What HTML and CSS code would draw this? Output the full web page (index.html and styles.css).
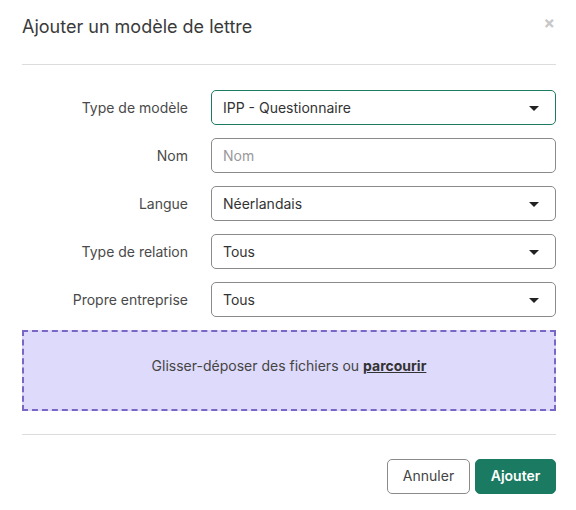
FILE: index.html
```html
<!DOCTYPE html>
<html lang="fr">

<head>
    <meta charset="utf-8">
    <meta name="viewport" content="width=device-width, initial-scale=1.0">
    <title>Ajouter un modèle de lettre</title>
    <link rel="stylesheet" href="styles.css">
</head>

<body>
    <div class="modal">
        <header class="modal_header">
            <h2>Ajouter un modèle de lettre</h2>
            <span class="close pointer">×</span>
        </header>
        <section class="modal_body">
            <div class="row">
                <label>Type de modèle</label>
                <div class="field field_active">
                    <span>IPP - Questionnaire</span>
                    <span class="caret"></span>
                </div>
            </div>
            <div class="row">
                <label>Nom</label>
                <div class="field">
                    <span class="placeholder">Nom</span>
                </div>
            </div>
            <div class="row">
                <label>Langue</label>
                <div class="field">
                    <span>Néerlandais</span>
                    <span class="caret"></span>
                </div>
            </div>
            <div class="row">
                <label>Type de relation</label>
                <div class="field">
                    <span>Tous</span>
                    <span class="caret"></span>
                </div>
            </div>
            <div class="row">
                <label>Propre entreprise</label>
                <div class="field">
                    <span>Tous</span>
                    <span class="caret"></span>
                </div>
            </div>
            <div class="dropzone">
                <p>Glisser-déposer des fichiers ou <a class="pointer">parcourir</a></p>
            </div>
        </section>
        <footer class="modal_footer">
            <button class="pointer cancel_button">Annuler</button>
            <button class="pointer add_button">Ajouter</button>
        </footer>
    </div>
</body>

</html>
```

FILE: styles.css
```css
* {
    box-sizing: border-box;
}

body {
    margin: 0;
    background: white;
    font-family: 'Inter', 'Liberation Sans', sans-serif;
    color: #333;
}

.modal {
    width: 576px;
    padding: 0 20px 0 22px;
}

.modal_header {
    display: flex;
    justify-content: space-between;
    align-items: flex-start;
    height: 65px;
    border-bottom: 1px solid #dcdcdc;
}

.modal_header h2 {
    font-size: 18px;
    font-weight: 400;
    color: #3a3a3a;
    margin: 15px 0 0;
    line-height: 24px;
}

.close {
    font-size: 17px;
    color: #c8c8c8;
    margin: 13px 1px 0 0;
    line-height: 20px;
    font-weight: 700;
}

.modal_body {
    padding-top: 25px;
    padding-bottom: 23px;
    border-bottom: 1px solid #dcdcdc;
}

.row {
    display: flex;
    align-items: center;
    margin-bottom: 13px;
}

.row label {
    width: 166px;
    margin-right: 23px;
    text-align: right;
    font-size: 14px;
    color: #4a4a4a;
}

.field {
    flex: 1;
    height: 35px;
    display: flex;
    justify-content: space-between;
    align-items: center;
    padding: 0 16px 0 11px;
    border: 1px solid #8a8a8a;
    border-radius: 5px;
    font-size: 14px;
    color: #333;
}

.field_active {
    border-color: #1e7a62;
}

.placeholder {
    color: #999;
}

.caret {
    width: 0;
    height: 0;
    border-left: 5px solid transparent;
    border-right: 5px solid transparent;
    border-top: 5px solid #222;
    margin-top: 1px;
}

.dropzone {
    height: 81px;
    display: flex;
    align-items: center;
    justify-content: center;
    padding-bottom: 10px;
    background: #dedafb;
    border: 2px dashed #7a66c4;
}

.dropzone p {
    margin: 0;
    font-size: 14px;
    color: #444;
}

.dropzone a {
    font-weight: 700;
    color: #333;
    text-decoration: underline;
}

.modal_footer {
    display: flex;
    justify-content: flex-end;
    gap: 5px;
    padding-top: 24px;
}

.modal_footer button {
    font-family: 'Inter', 'Liberation Sans', sans-serif;
    font-size: 14px;
    height: 35px;
    padding-bottom: 3px;
    border-radius: 5px;
}

.cancel_button {
    width: 83px;
    background: white;
    border: 1px solid #8a8a8a;
    color: #444;
}

.add_button {
    width: 81px;
    background: #1b7a62;
    border: 1px solid #1b7a62;
    color: white;
    font-weight: 600;
}

.pointer {
    cursor: pointer;
}
```
